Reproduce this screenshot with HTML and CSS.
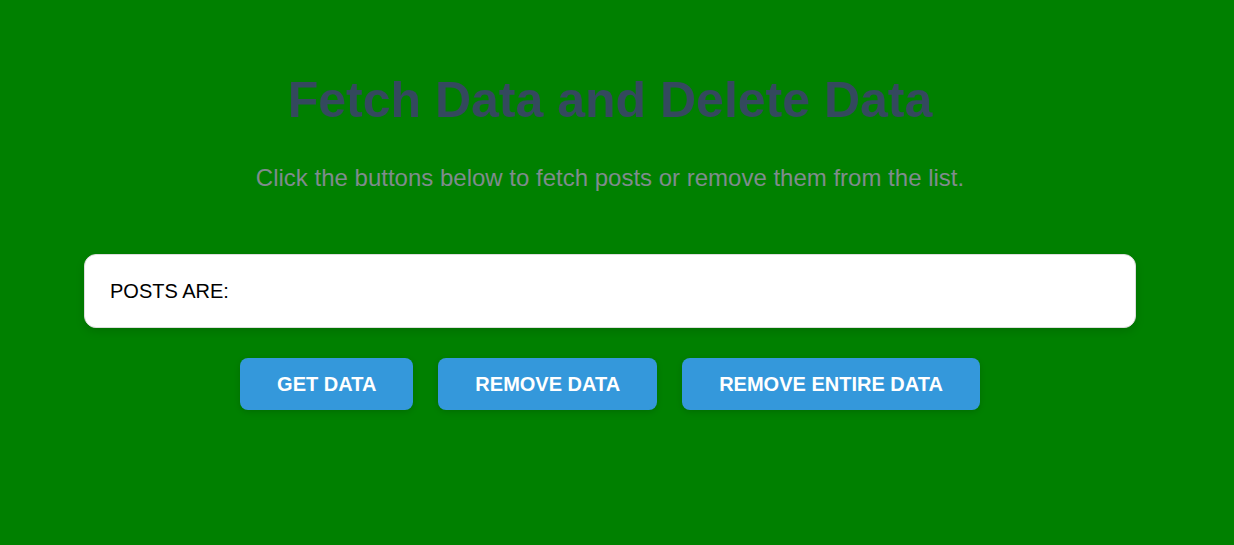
FILE: index.html
```html
<!DOCTYPE html>
<html lang="en">
<head>
<meta charset="utf-8">
<title>Fetch Data and Delete Data</title>
<link rel="stylesheet" href="styles.css">
</head>
<body>
<main class="page">
  <h1 class="title">Fetch Data and Delete Data</h1>
  <p class="subtitle">Click the buttons below to fetch posts or remove them from the list.</p>
  <section class="posts-card">
    <p class="posts-label">POSTS ARE:</p>
  </section>
  <div class="actions">
    <button class="btn">GET DATA</button>
    <button class="btn">REMOVE DATA</button>
    <button class="btn">REMOVE ENTIRE DATA</button>
  </div>
</main>
</body>
</html>
```

FILE: styles.css
```css
* { box-sizing: border-box; }
html, body {
  margin: 0;
  padding: 0;
  background: #008000;
  height: 100%;
}
body {
  font-family: "Liberation Sans", Arial, sans-serif;
}
.page {
  width: 1220px;
  padding-top: 72px;
  display: flex;
  flex-direction: column;
  align-items: center;
}
.title {
  margin: 0;
  font-size: 50px;
  font-weight: bold;
  color: #34495e;
  line-height: 57px;
}
.subtitle {
  margin: 35px 0 0;
  font-size: 24px;
  color: #7f8c8d;
  line-height: 28px;
}
.posts-card {
  align-self: stretch;
  margin: 62px 84px 0;
  background: #fff;
  border: 1px solid #ddd;
  border-radius: 12px;
  padding: 25px 25px;
  height: 74px;
  box-shadow: 0 4px 10px rgba(0, 0, 0, 0.12);
}
.posts-label {
  margin: 0;
  font-size: 20px;
  line-height: 22px;
  color: #000;
}
.actions {
  display: flex;
  gap: 25px;
  margin-top: 30px;
}
.btn {
  font-family: "Liberation Sans", Arial, sans-serif;
  font-size: 20px;
  font-weight: bold;
  color: #fff;
  background: #3498db;
  border: none;
  border-radius: 8px;
  height: 52px;
  padding: 0 37px;
  box-shadow: 0 2px 6px rgba(0, 0, 0, 0.15);
}
```
